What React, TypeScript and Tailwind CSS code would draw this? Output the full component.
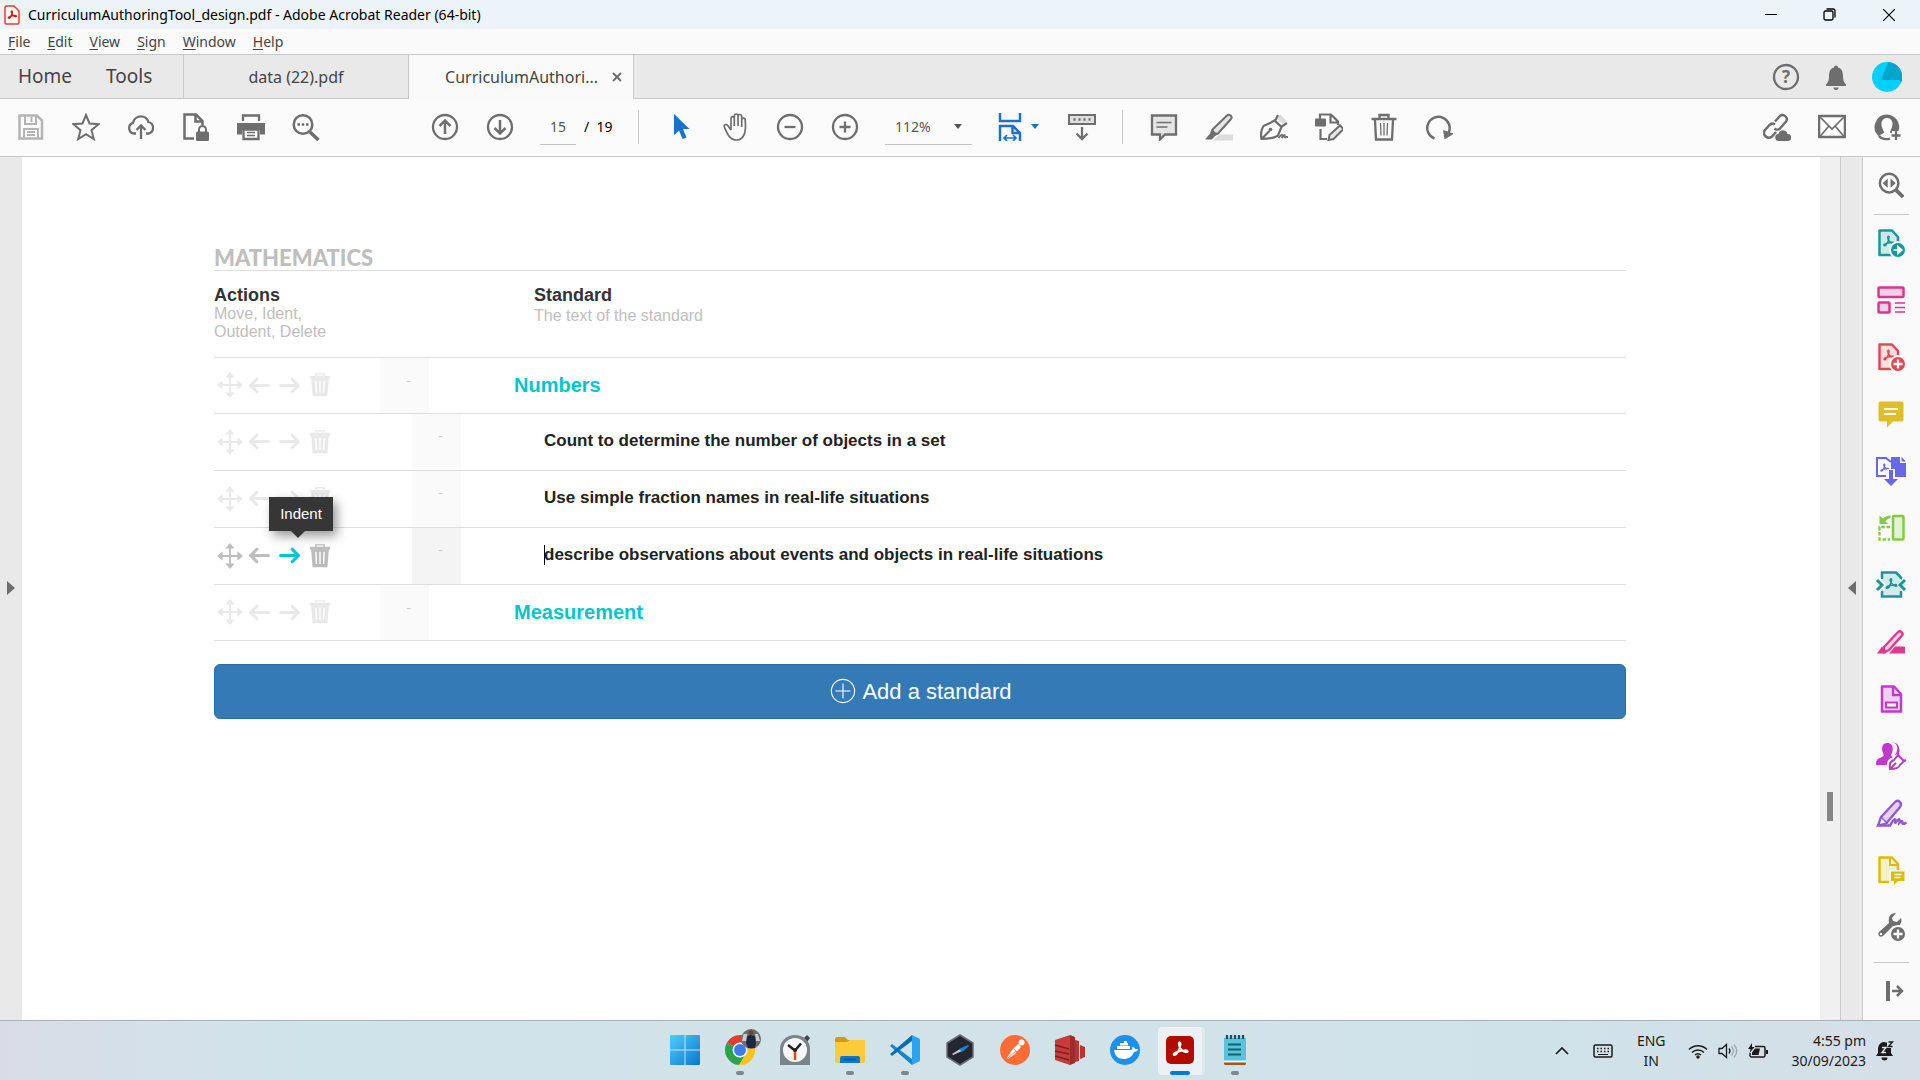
import type { ReactNode } from "react";

type IconProps = { children: ReactNode; className?: string; size?: string };

// every drawing sits on a 28 x 28 grid
const Icon = ({ children, className = "", size = "w-7 h-7" }: IconProps) => (
  <svg
    viewBox="0 0 28 28"
    fill="none"
    stroke="currentColor"
    strokeWidth="2"
    aria-hidden="true"
    className={`shrink-0 ${size} ${className}`}
  >
    {children}
  </svg>
);

const Trefoil = () => (
  <path d="M4 21C2 18 14 15 20 14.500C26 14 26 18 21 17C16 16 11.500 9 11.500 5C11.500 1.500 14.500 2 14 6C13.500 11 8 24 4 21Z" />
);

type ToolProps = { label: string; children: ReactNode; className?: string };

const Tool = ({ label, children, className = "text-[#6e6e6e]" }: ToolProps) => (
  <button
    aria-label={label}
    className={`w-[55px] h-full shrink-0 flex items-center justify-center ${className}`}
  >
    <Icon>{children}</Icon>
  </button>
);

const TitleBar = () => (
  <header className="h-[29px] bg-[#ecf4f9] flex items-center justify-between shrink-0">
    <div className="flex items-center gap-2 pl-1">
      <svg viewBox="0 0 16 20" className="w-4 h-5" fill="none" aria-hidden="true">
        <path
          d="M2.500 1H10l5 5v11.500a1.500 1.500 0 0 1-1.500 1.500h-11A1.500 1.500 0 0 1 1 17.500v-15A1.500 1.500 0 0 1 2.500 1Z"
          fill="#fff"
          stroke="#ec3b36"
          strokeWidth="1.500"
        />
        <g transform="translate(3 5) scale(.38)" stroke="#d0201b" strokeWidth="4">
          <Trefoil />
        </g>
      </svg>
      <h1 className="text-[14px] text-black whitespace-nowrap">
        CurriculumAuthoringTool_design.pdf - Adobe Acrobat Reader (64-bit)
      </h1>
    </div>
    <div className="flex h-full pr-[2px] text-black">
      <button aria-label="Minimize" className="w-[59px] flex items-center justify-center">
        <svg viewBox="0 0 12 12" className="w-3 h-3" stroke="currentColor" aria-hidden="true">
          <path d="M0 5.500h12" />
        </svg>
      </button>
      <button aria-label="Restore" className="w-[59px] flex items-center justify-center">
        <svg viewBox="0 0 13 13" className="w-[13px] h-[13px]" stroke="currentColor" strokeWidth="1.300" fill="none" aria-hidden="true">
          <rect x="1" y="3" width="9" height="9" rx="1.500" />
          <path d="M3.500 1H10a2 2 0 0 1 2 2v6.500" />
        </svg>
      </button>
      <button aria-label="Close" className="w-[59px] flex items-center justify-center">
        <svg viewBox="0 0 12 12" className="w-3 h-3" stroke="currentColor" strokeWidth="1.200" aria-hidden="true">
          <path d="M0 0l12 12M12 0L0 12" />
        </svg>
      </button>
    </div>
  </header>
);

const menus = ["File", "Edit", "View", "Sign", "Window", "Help"];

const MenuBar = () => (
  <nav className="h-[25px] bg-[#fafafa] flex items-center gap-[17px] pl-2 text-[14px] text-[#444] shrink-0">
    {menus.map((menu) => (
      <button key={menu}>
        <span className="underline underline-offset-2">{menu[0]}</span>
        {menu.slice(1)}
      </button>
    ))}
  </nav>
);

const TabBar = () => (
  <div className="h-[45px] bg-[#e9e9e9] border-y border-[#c8c8c8] flex items-stretch text-[#444] shrink-0">
    <div className="w-[184px] flex items-center pl-[18px] gap-[34px] text-[19px] border-r border-[#c8c8c8]">
      <button>Home</button>
      <button>Tools</button>
    </div>
    <button className="w-[225px] text-center text-[16px] border-r border-[#c8c8c8]">
      data (22).pdf
    </button>
    <div className="w-[225px] -mb-px bg-[#fafafa] flex items-center justify-end gap-[14px] pr-[11px] text-[16px] border-r border-[#c8c8c8]">
      <button>CurriculumAuthori...</button>
      <button aria-label="Close tab">
        <svg viewBox="0 0 10 10" className="w-[10px] h-[10px]" stroke="#6e6e6e" strokeWidth="2" aria-hidden="true">
          <path d="M1 1l8 8M9 1L1 9" />
        </svg>
      </button>
    </div>
    <div className="ml-auto flex items-center gap-[22px] pr-[18px] text-[#6e6e6e]">
      <button aria-label="Help">
        <Icon>
          <circle cx="14" cy="14" r="12" strokeWidth="2.300" />
          <text x="14" y="20" textAnchor="middle" fill="currentColor" stroke="none" fontSize="17" fontWeight="700">
            ?
          </text>
        </Icon>
      </button>
      <button aria-label="Notifications">
        <Icon>
          <path
            d="M14 2.500a2 2 0 0 1 2 2c4 1 5 4.500 5 8.500 0 4.500 1 6.500 3 8.500v1.500H4v-1.500c2-2 3-4 3-8.500 0-4 1-7.500 5-8.500a2 2 0 0 1 2-2ZM11.500 24.500h5a2.500 2.500 0 0 1-5 0Z"
            fill="currentColor"
            stroke="none"
          />
        </Icon>
      </button>
      <button aria-label="Account">
        <svg viewBox="0 0 30 30" className="w-[30px] h-[30px]" aria-hidden="true">
          <circle cx="15" cy="15" r="15" fill="#00cfff" />
          <path d="M9 18L16.500 0A15 15 0 0 1 29.500 20L27 18Z" fill="#00a5cb" />
        </svg>
      </button>
    </div>
  </div>
);

const Toolbar = () => (
  <div
    role="toolbar"
    className="h-[58px] pb-[2px] bg-[#fbfbfb] border-b border-[#c8c8c8] flex items-center shrink-0"
  >
    <div className="flex h-full pl-[3px]">
      <Tool label="Save" className="text-[#b4b4b4]">
        <path d="M2.500 2.500H20l5 5v18H2.500Z" strokeWidth="2.500" />
        <path d="M8 3v8h11V3M14.500 4v5M7 25v-9h14v9M10 19h8M10 22h8" />
      </Tool>
      <Tool label="Star">
        <path d="M14 2l3.500 8.500 9 .7-7 6 2.300 8.900L14 21.200l-7.800 4.900 2.300-8.900-7-6 9-.7Z" />
      </Tool>
      <Tool label="Upload">
        <path d="M9 20.500H7A5.500 5.500 0 0 1 6 9.800 8 8 0 0 1 21.500 9a6 6 0 0 1 .5 11.500h-3M14 26V13M9.500 17l4.500-4.500 4.500 4.500" strokeWidth="2.300" />
      </Tool>
      <Tool label="Protect">
        <path d="M12 25.500H2.500v-24H14l6.500 6.500v4M13.500 2v6.500H20" strokeWidth="2.500" />
        <rect x="14" y="18.500" width="13" height="9.500" rx="1.500" fill="currentColor" stroke="none" />
        <path d="M17 19v-2.500a3.500 3.500 0 0 1 7 0V19" />
      </Tool>
      <Tool label="Print">
        <path d="M6 8V2.500h16V8" strokeWidth="2.300" />
        <path d="M0 10h28v11.500h-5V17H5v4.500H0Z" fill="currentColor" stroke="none" />
        <path d="M6.500 16.500h15V26h-15Z" fill="#fff" strokeWidth="2.300" />
        <path d="M10 19.500h8M10 22.500h8" strokeWidth="1.500" />
      </Tool>
      <Tool label="Find">
        <circle cx="11" cy="11.500" r="9.300" strokeWidth="2.500" />
        <path d="M18 19l8.500 8" strokeWidth="3.500" />
        <path d="M5.500 11.500h2.500M9.800 11.500h2.500M14 11.500h2.500" strokeWidth="2.500" />
      </Tool>
    </div>
    <div className="flex items-center h-full ml-[84px]">
      <Tool label="Previous page">
        <circle cx="14" cy="14" r="12" strokeWidth="2.300" />
        <path d="M14 21V8M8.500 13L14 7.500l5.500 5.500" strokeWidth="2.500" />
      </Tool>
      <Tool label="Next page">
        <circle cx="14" cy="14" r="12" strokeWidth="2.300" />
        <path d="M14 7v13M8.500 15l5.500 5.500 5.500-5.500" strokeWidth="2.500" />
      </Tool>
      <input
        aria-label="Page number"
        defaultValue="15"
        className="w-9 h-9 ml-[13px] text-center text-[14px] text-[#555] border-b border-[#c4c4c4]"
      />
      <span className="w-[62px] pl-2 text-[14px] text-black whitespace-pre">/  19</span>
      <div className="w-px h-[34px] bg-[#c8c8c8]" />
    </div>
    <div className="flex items-center h-full ml-[13px]">
      <Tool label="Select" className="text-[#1b71cc]">
        <path d="M8 1v21l5-4.500 3.500 8.500 4-1.500-3.500-8.500h6.500Z" fill="currentColor" stroke="none" />
      </Tool>
      <Tool label="Hand">
        <path
          d="M8 17V5.500c0-2.500 3.300-2.500 3.300 0V13 3c0-2.700 3.700-2.700 3.700 0v10V3.500c0-2.700 3.700-2.700 3.700 0V14 7c0-2.500 3.500-2.500 3.500 0 .4 5 2.300 19-8.200 20C6 27 4 20 1.500 14.500 0 11 4 10.500 5.500 13.500L8 17"
          transform="translate(2 0)"
          strokeWidth="1.700"
        />
      </Tool>
      <Tool label="Zoom out">
        <circle cx="14" cy="14" r="12" strokeWidth="2.300" />
        <path d="M8.500 14h11" strokeWidth="2.300" />
      </Tool>
      <Tool label="Zoom in">
        <circle cx="14" cy="14" r="12" strokeWidth="2.300" />
        <path d="M8.500 14h11M14 8.500v11" strokeWidth="2.300" />
      </Tool>
      <button
        aria-label="Zoom level"
        className="w-[87px] h-9 ml-[13px] flex items-center justify-between pl-[10px] pr-[10px] text-[14px] text-[#555] border-b border-[#c4c4c4]"
      >
        112%
        <span className="border-x-4 border-x-transparent border-t-[5px] border-t-[#555]" />
      </button>
      <button aria-label="Fit width" className="ml-6 flex items-center gap-[7px] text-[#1b71cc]">
        <Icon>
          <path d="M4 0v8h20V0" strokeWidth="2.500" />
          <path d="M4 30V13h13l7 7v10M16.500 13.500V20H24" strokeWidth="2.500" />
          <path d="M8 25h12M11 22l-3 3 3 3M17 22l3 3-3 3" strokeWidth="1.700" />
        </Icon>
        <span className="border-x-4 border-x-transparent border-t-[5px] border-t-[#1b71cc]" />
      </button>
      <button aria-label="Page display" className="ml-[29px] text-[#6e6e6e]">
        <Icon>
          <rect x="1" y="2" width="26" height="9" strokeWidth="2" fill="#dedede" />
          <path d="M5.500 6.500h2M10.500 6.500h2M15.500 6.500h2M20.500 6.500h2" strokeWidth="2.500" />
          <path d="M14 14v12M8.500 20.500L14 26l5.500-5.500" strokeWidth="2.300" />
        </Icon>
      </button>
      <div className="w-px h-[34px] ml-[26px] bg-[#c8c8c8]" />
    </div>
    <div className="flex h-full ml-[13px]">
      <Tool label="Comment">
        <path d="M2 2.500h24v19H15l-5 5v-5H2Z" fill="#e4e4e4" strokeWidth="2.300" />
        <path d="M6.500 9.500h15M6.500 14h11" strokeWidth="1.700" />
      </Tool>
      <Tool label="Highlight">
        <path d="M8 27.500l6-6h14v6Z" fill="#dcdcdc" stroke="none" />
        <path d="M8 16L22 2.500c2-2 6 1 4 3.500L13 20.500l-4 .5-2-2Z" fill="#e4e4e4" />
        <path d="M6.500 16l6.500 5.500-3 1.500-3 3.500H0l5-6Z" fill="currentColor" stroke="none" />
      </Tool>
      <Tool label="Sign">
        <path d="M17 6l3-5 7 7-4 3Z" fill="#dcdcdc" stroke="none" />
        <path d="M1.500 26c-1-5 0-10 2-13 4-2 7-3 11-5.500l7 6.500c-2 4-2 6-4 9-4 2-9 3-16 3Zm0 0l8-8M15 8l3-6M21 14l6-4" strokeWidth="2.200" />
        <circle cx="10.500" cy="16.500" r="1.800" fill="currentColor" stroke="none" />
        <path d="M18.500 25c4-5 4-4 3.500 0 3-5 3-3 3 0 1-2 1-1 3-1" strokeWidth="1.800" />
      </Tool>
      <Tool label="Edit PDF">
        <path d="M5 6V1.500h11l7 7V12M15.500 2v7.500H23M5.500 16v10H12" strokeWidth="2.200" />
        <rect x="0" y="5.500" width="11" height="8" rx="1" fill="currentColor" stroke="none" />
        <path d="M13.500 27l1-5L25 12.500l3.500 3.500L18.500 26Z" fill="#e9e9e9" />
      </Tool>
      <Tool label="Delete">
        <path d="M1.500 6h25M9.500 6V2h9v4M5 7l1 19.500h16L23 7" strokeWidth="2.300" />
        <path d="M10.500 10l.5 12.500M14 10v12.500M17.500 10l-.5 12.500" strokeWidth="1.300" />
      </Tool>
      <Tool label="Rotate">
        <path d="M9.500 25.500A11.200 11.200 0 1 1 23.500 20" strokeWidth="2.500" />
        <path d="M18 17l11 3.500-9.500 6Z" fill="currentColor" stroke="none" />
      </Tool>
    </div>
    <div className="flex h-full ml-auto pr-[6px]">
      <Tool label="Share link">
        <path d="M12 8.500l5-5.500c3-3 9 1.500 6 5.500l-6 7c-2 1.800-4.500 1-5.500 0M12 11.500c-1.500-1-4-1-5.500.5L2 17c-3.500 4.500 2.500 10 7 6.500l4-4.500" strokeWidth="2.500" />
        <path d="M16 28a3.500 3.500 0 0 1-.5-7c1-5 8-5 9 0a3.500 3.500 0 0 1 .5 7Z" fill="currentColor" stroke="none" />
      </Tool>
      <Tool label="Email">
        <rect x="1" y="3" width="26" height="21" strokeWidth="2.500" />
        <path d="M2 4l12 12L26 4M2 23.500l8.500-10M26 23.500l-8.500-10" strokeWidth="1.700" />
      </Tool>
      <Tool label="Add people">
        <path
          d="M14 1.500A12.500 12.500 0 0 0 6 23.500c1-2.500 4-2 5-4 .5-1-2.500-4-2.500-8.500 0-8 11-8 11 0 0 4-2.500 6.500-2.500 8.500l2 1v-2.500h6.500A12.500 12.500 0 0 0 14 1.500Z"
          fill="currentColor"
          stroke="none"
        />
        <path d="M6 23c2 3 8 4 11 2.500M23 18v9M18.500 22.500h9" strokeWidth="2.300" />
      </Tool>
    </div>
  </div>
);

const actionButton = "w-[25px] h-6 flex items-center justify-center";

const RowActions = ({ active }: { active: boolean }) => (
  <div className={`flex items-center gap-[5px] pl-[3px] ${active ? "text-[#bdbdbd]" : "text-[#e9e9e9]"}`}>
    <button aria-label="Move" className={actionButton}>
      <Icon size="w-[26px] h-[26px]">
        <path d="M14 4v20M4 14h20" />
        <path d="M14 0l5 6H9ZM14 28l5-6H9ZM0 14l6-5v10ZM28 14l-6-5v10Z" fill="currentColor" stroke="none" />
      </Icon>
    </button>
    <button aria-label="Outdent" className={actionButton}>
      <Icon size="w-[25px] h-[25px]">
        <path d="M24 14H4M11 7l-7 7 7 7" strokeWidth="3.500" strokeLinecap="round" strokeLinejoin="round" />
      </Icon>
    </button>
    <button aria-label="Indent" className={`relative ${actionButton} ${active ? "text-[#00c5cd]" : ""}`}>
      <Icon size="w-[25px] h-[25px]">
        <path d="M4 14h20M17 7l7 7-7 7" strokeWidth="3.500" strokeLinecap="round" strokeLinejoin="round" />
      </Icon>
      {active && (
        <span
          role="tooltip"
          className="absolute z-10 left-[-8px] bottom-[37px] w-16 h-[34px] bg-[#363636] text-white text-[15px] leading-[34px] shadow-[4px_5px_10px_rgba(0,0,0,0.4)]"
        >
          Indent
          <span className="absolute left-[22px] top-[34px] border-x-[7px] border-x-transparent border-t-[7px] border-t-[#363636]" />
        </span>
      )}
    </button>
    <button aria-label="Delete" className={actionButton}>
      <Icon size="w-[26px] h-[26px]">
        <path d="M9.500 4.500V2h9v2.500" strokeWidth="1.500" />
        <path d="M3 4h22v3h-1.500L22 26H6L4.500 7H3Z" fill="currentColor" stroke="none" />
        <path d="M9.500 9.500l.7 13M14 9.500v13M18.500 9.500l-.7 13" stroke="#fff" strokeWidth="1.500" />
      </Icon>
    </button>
  </div>
);

type Row = { text: string; level: 1 | 2; active?: boolean };

const rows: Row[] = [
  { text: "Numbers", level: 1 },
  { text: "Count to determine the number of objects in a set", level: 2 },
  { text: "Use simple fraction names in real-life situations", level: 2 },
  { text: "describe observations about events and objects in real-life situations", level: 2, active: true },
  { text: "Measurement", level: 1 },
];

const StandardRow = ({ text, level, active = false }: Row) => (
  <tr className={`border-b border-[#dedede] ${level === 1 ? "h-14" : "h-[57px]"}`}>
    <td className="p-0">
      <RowActions active={active} />
    </td>
    <td className="p-0 h-px">
      <div
        className={`w-[49px] h-full flex justify-center pl-2 text-[15px] leading-5 text-[#cfcfcf] ${
          level === 1 ? "pt-[13px]" : "ml-8 pt-3"
        } ${active ? "bg-[#f4f4f4]" : "bg-[#fafafa]"}`}
      >
        -
      </div>
    </td>
    <td
      className={
        level === 1
          ? "p-0 text-[20px] font-bold text-[#00c5cd]"
          : "p-0 pl-[30px] pb-[2px] text-[17px] font-bold text-[#222]"
      }
    >
      {active ? (
        <div className="flex items-center">
          <span className="w-px -mr-px h-5 bg-black" />
          <input aria-label="Standard text" defaultValue={text} className="w-full font-bold" />
        </div>
      ) : (
        text
      )}
    </td>
  </tr>
);

const Standards = () => (
  <section className="pt-[89px] pl-48 pr-[194px] font-['Liberation_Sans',Arial,sans-serif]">
    <h2 className="text-[22px] leading-6 font-black text-[#bebebe] border-b border-[#dedede] font-['Lato',sans-serif]">
      MATHEMATICS
    </h2>
    <table className="w-full table-fixed border-collapse text-left">
      <colgroup>
        <col className="w-[166px]" />
        <col className="w-[134px]" />
        <col />
      </colgroup>
      <thead>
        <tr className="h-[86px] border-b border-[#dedede] align-top">
          <th className="p-0 pt-[14px] font-normal" colSpan={2}>
            <div className="text-[18px] leading-5 font-bold text-[#333]">Actions</div>
            <div className="text-[16px] leading-[18px] text-[#bebebe]">
              Move, Ident,
              <br />
              Outdent, Delete
            </div>
          </th>
          <th className="p-0 pt-[14px] pl-5 font-normal">
            <div className="text-[18px] leading-5 font-bold text-[#333]">Standard</div>
            <div className="text-[16px] leading-[22px] text-[#bebebe]">The text of the standard</div>
          </th>
        </tr>
      </thead>
      <tbody>
        {rows.map((row) => (
          <StandardRow key={row.text} {...row} />
        ))}
      </tbody>
    </table>
    <button className="mt-[23px] w-full h-[55px] pl-[2px] rounded-md bg-[#337ab7] border border-[#2e6da4] text-white text-[22px] flex items-center justify-center gap-[6px]">
      <Icon size="w-[26px] h-[26px]">
        <circle cx="14" cy="14" r="12.500" strokeWidth="1.200" />
        <path d="M14 6v16M6 14h16" strokeWidth="1.200" />
      </Icon>
      Add a standard
    </button>
  </section>
);

type PageProps = { children: ReactNode; fill: string };

const Page = ({ children, fill }: PageProps) => (
  <>
    <path d="M2.500 1.500H15l6 6.500v18H2.500Z" fill={fill} strokeWidth="2.500" strokeLinejoin="round" />
    {children}
  </>
);

const sideTools = [
  {
    label: "Export PDF",
    color: "text-[#1b959a]",
    icon: (
      <Page fill="#cfe8e9">
        <g transform="translate(5 6) scale(.5)" strokeWidth="3"><Trefoil /></g>
        <circle cx="21" cy="21" r="8" fill="currentColor" stroke="#fafafa" />
        <path d="M16.500 21h7M21 17.500l4 3.500-4 3.500Z" stroke="#fff" fill="#fff" strokeWidth="1.500" />
      </Page>
    ),
  },
  {
    label: "Organize Pages",
    color: "text-[#d83790]",
    icon: (
      <>
        <rect x="1.500" y="1.500" width="25" height="9.500" rx="1" fill="#f4cfe3" strokeWidth="2.500" />
        <rect x="1.500" y="16.500" width="11" height="10" rx="1" fill="#f4cfe3" strokeWidth="2.500" />
        <path d="M18 17h10M18 21.500h10M18 26h10" strokeWidth="1.500" />
      </>
    ),
  },
  {
    label: "Create PDF",
    color: "text-[#e34850]",
    icon: (
      <Page fill="#f9dfe0">
        <g transform="translate(5 6) scale(.5)" strokeWidth="3"><Trefoil /></g>
        <circle cx="21" cy="21" r="8" fill="currentColor" stroke="#fafafa" />
        <path d="M16.500 21h9M21 16.500v9" stroke="#fff" strokeWidth="2.300" />
      </Page>
    ),
  },
  {
    label: "Comment",
    color: "text-[#dfbf27]",
    icon: (
      <>
        <path d="M3.500 1.500h21a2 2 0 0 1 2 2v16a2 2 0 0 1-2 2H16l-6 6v-6H3.500a2 2 0 0 1-2-2v-16a2 2 0 0 1 2-2Z" fill="currentColor" stroke="none" />
        <path d="M7 9h14M7 14h12" stroke="#fff" />
      </>
    ),
  },
  {
    label: "Combine Files",
    color: "text-[#6767ec]",
    icon: (
      <>
        <path d="M9 19H0V1h9l5 4" strokeWidth="2" />
        <path d="M14 0h9v6h6v14H14Z" fill="currentColor" stroke="none" />
        <path d="M24.500 0l4.500 4.500h-4.500Z" fill="currentColor" stroke="none" />
        <g transform="translate(2.500 6) scale(.38)" strokeWidth="3.500"><Trefoil /></g>
        <path d="M14 12v12" stroke="#fafafa" strokeWidth="8" />
        <path d="M14 13v10" strokeWidth="4" />
        <path d="M7 22h14l-7 7Z" fill="currentColor" stroke="none" />
      </>
    ),
  },
  {
    label: "Compare",
    color: "text-[#83cc40]",
    icon: (
      <>
        <rect x="16" y="2" width="10.500" height="23.500" rx="1" fill="#e1f3d0" strokeWidth="2.500" />
        <path d="M13 13H2.500v12.500H13" strokeDasharray="3.500 1.700" strokeWidth="2.300" />
        <path d="M2.500 1.500v8.500h9L8.500 7.500c1-2 3-3 5-3.500V1.500C10.500 1.500 8 2.500 6 4.500Z" fill="currentColor" stroke="none" />
      </>
    ),
  },
  {
    label: "Compress PDF",
    color: "text-[#1b959a]",
    icon: (
      <>
        <path d="M5 8V1.500h14l5 5V9M5 20v5.500h19V20" fill="#d5e9ea" strokeWidth="2.500" />
        <path d="M5 8h19v12H5Z" fill="#d5e9ea" stroke="none" />
        <g transform="translate(7.500 6.500) scale(.5)" strokeWidth="3.500"><Trefoil /></g>
        <path d="M0 8l5 6-5 6M29 8l-5 6 5 6" stroke="#fafafa" strokeWidth="6" />
        <path d="M0 9l5 5-5 5M28 9l-5 5 5 5" strokeWidth="3" />
      </>
    ),
  },
  {
    label: "Redact",
    color: "text-[#e0378f]",
    icon: (
      <>
        <path d="M7 19L21 4c2.500-2 6 1 4 3.500L12 22l-5 2Z" fill="#f9cfe3" strokeWidth="2.300" />
        <path d="M0 25.500l5-7 5 5-2 2ZM12 25.500l6-7h9a1 1 0 0 1 1 1v6Z" fill="currentColor" stroke="none" />
      </>
    ),
  },
  {
    label: "Prepare Form",
    color: "text-[#c038cc]",
    icon: (
      <>
        <path d="M5 1.500h12l7 7.500v17.500H5Z" fill="#efcff2" strokeWidth="2.500" strokeLinejoin="round" />
        <path d="M16 2v8h8" strokeWidth="2.300" />
        <rect x="9" y="17.500" width="11" height="5" fill="#fff" />
      </>
    ),
  },
  {
    label: "Request Signatures",
    color: "text-[#c038cc]",
    icon: (
      <>
        <path d="M10 1c8 0 6 9 4 12 0 2 3 2 3 4l-5 6H-1c0-5 1-6 6-8 3-1 1-3 1-4-2-4-1-10 4-10ZM15 1c7-1 6 9 3 12l3 1c3-3 2-15-6-13Z" fill="currentColor" stroke="none" />
        <path d="M12 27c0-5 1-9 4-9l7-5 5 5-4 5c-1 3-6 4-12 4Z" fill="#fff" stroke="#fafafa" strokeWidth="5" />
        <path d="M13 27c-1-5 1-8 4-9l4-5 6 6-4 4c-1 3-5 4-10 4Zm0 0l6-6M20 12l2-1M27 19l2-1" />
      </>
    ),
  },
  {
    label: "Fill & Sign",
    color: "text-[#9256d9]",
    icon: (
      <>
        <path d="M1 26.500L4 18 18 3c3-3 8 1 5 5L10 23.500Zm0 0H14" fill="#e2d3f5" strokeWidth="2.300" />
        <path d="M4 18l6 6-8 2Z" fill="#fafafa" strokeWidth="1.500" />
        <path d="M13 26.500c5-9 6-7 5-2 4-6 5-5 4.500-1 3-3 3-1 3 1 1 1 2 0 4-1" strokeWidth="2.500" />
      </>
    ),
  },
  {
    label: "Send for Comments",
    color: "text-[#ddbb0b]",
    icon: (
      <Page fill="#f6efc9">
        <path d="M13 2v7h8" />
        <path d="M12 14h18v17H12Z" fill="#fafafa" stroke="none" />
        <path d="M14 15.500h13.500v9.500H21l-4 4v-4h-3Z" fill="currentColor" stroke="none" />
        <path d="M17.500 18.500h7M17.500 21.500h6" stroke="#fff" strokeWidth="1.500" />
      </Page>
    ),
  },
  {
    label: "More Tools",
    color: "text-[#6e6e6e]",
    icon: (
      <>
        <path d="M19 0l-4 5 1 3 4 1 4-4c2 5-2 10-8 8L6 23c-3 2-6-1-4-4l10-9c-1-6 1-10 7-10Z" fill="currentColor" stroke="none" />
        <circle cx="4" cy="21" r="1.200" fill="#fff" stroke="none" />
        <circle cx="21" cy="21" r="8" fill="currentColor" stroke="#fafafa" />
        <path d="M16.500 21h9M21 16.500v9" stroke="#fff" strokeWidth="2.300" />
      </>
    ),
  },
];

const sideButton = "w-full h-[57px] pb-[2px] pr-[2px] flex items-center justify-center";

const SidePanel = () => (
  <aside className="w-[58px] shrink-0 border-l border-[#c8c8c8] bg-[#fafafa] flex flex-col items-center">
    <button aria-label="Search tools" className={`${sideButton} text-[#6e6e6e]`}>
      <Icon size="w-[26px] h-[26px]">
        <circle cx="12" cy="12" r="10" strokeWidth="2.700" />
        <path d="M19 19l8 8" strokeWidth="4" />
        <path d="M10.500 7v10L5 12ZM13.500 7v10l5.500-5Z" fill="currentColor" stroke="none" />
      </Icon>
    </button>
    <div className="w-[35px] h-px bg-[#c8c8c8]" />
    {sideTools.map((tool) => (
      <button key={tool.label} aria-label={tool.label} className={`${sideButton} ${tool.color}`}>
        <Icon className="overflow-visible">{tool.icon}</Icon>
      </button>
    ))}
    <div className="w-[35px] h-px mt-[6px] bg-[#c8c8c8]" />
    <button aria-label="Hide panel" className={`${sideButton} text-[#6e6e6e]`}>
      <Icon>
        <path d="M11 4v20" strokeWidth="4" />
        <path d="M15 14h10M20 9l5 5-5 5" strokeWidth="2.500" />
      </Icon>
    </button>
  </aside>
);

const Workspace = () => (
  <div className="flex-1 min-h-0 flex items-stretch">
    <button aria-label="Show navigation pane" className="w-[22px] pb-[2px] shrink-0 bg-[#e9e9e9] flex items-center justify-center">
      <span className="border-y-[7px] border-y-transparent border-l-[8px] border-l-[#6e6e6e]" />
    </button>
    <main className="flex-1 min-w-0 bg-white">
      <Standards />
    </main>
    <div className="w-5 shrink-0 bg-[#f0f0f0] flex flex-col items-center">
      <div className="flex-[635]" />
      <div className="w-[6px] h-[29px] bg-[#868686]" />
      <div className="flex-[199]" />
    </div>
    <button aria-label="Collapse tools" className="w-[22px] pb-[2px] shrink-0 border-l border-[#c8c8c8] bg-[#e9e9e9] flex items-center justify-center">
      <span className="border-y-[7px] border-y-transparent border-r-[8px] border-r-[#6e6e6e]" />
    </button>
    <SidePanel />
  </div>
);

const apps = [
  {
    name: "Start",
    icon: (
      <>
        <defs>
          <linearGradient id="win" x1="0" y1="0" x2="1" y2="1">
            <stop stopColor="#4fcdf8" />
            <stop offset="1" stopColor="#0a77d0" />
          </linearGradient>
        </defs>
        <path d="M0 1a1 1 0 0 1 1-1h13.500v14.500H0ZM15.500 0H29a1 1 0 0 1 1 1v13.500H15.500ZM0 15.500h14.500V30H1a1 1 0 0 1-1-1ZM15.500 15.500H30V29a1 1 0 0 1-1 1H15.500Z" fill="url(#win)" />
      </>
    ),
  },
  {
    name: "Chrome",
    running: true,
    icon: (
      <>
        <path d="M15 15L2 7.500A15 15 0 0 1 28 7.500Z" fill="#e33b2e" />
        <path d="M15 15L2 7.500A15 15 0 0 0 14 30l7.500-12Z" fill="#2da14c" />
        <path d="M14 30A15 15 0 0 0 28 7.500H15L21.500 18Z" fill="#fcc31e" />
        <circle cx="15" cy="15" r="7.500" fill="#fff" />
        <circle cx="15" cy="15" r="6" fill="#3b7ded" />
        <circle cx="26" cy="4" r="10" fill="#716d68" />
        <path d="M18.500 -1h3.500v7h-5ZM30 -1h3l2 7h-4Z" fill="#c5cdd0" />
        <circle cx="26" cy="-2.500" r="2.500" fill="#6b4331" />
        <path d="M22 1l4-1 4 1 1 7-1 5h-7l-2-5Z" fill="#1c2944" />
      </>
    ),
  },
  {
    name: "Clock",
    icon: (
      <>
        <path d="M24 3l3-3 3 3-3 4Z" fill="#3f454b" />
        <path d="M0 30V14a15 14 0 0 1 30 0v16Z" fill="#7b838b" />
        <circle cx="15" cy="15" r="12" fill="#f7f7f7" />
        <path d="M8 10l7 5.500L21 8.500" stroke="#222" strokeWidth="2.500" fill="none" />
        <path d="M15 15v10" stroke="#d9481c" strokeWidth="2.500" />
        <circle cx="15" cy="15" r="2" fill="#222" />
      </>
    ),
  },
  {
    name: "File Explorer",
    running: true,
    icon: (
      <>
        <path d="M0 4a2 2 0 0 1 2-2h8l3 3h15a2 2 0 0 1 2 2v6H0Z" fill="#d9980e" />
        <path d="M0 7h12l3-2h15v21a2 2 0 0 1-2 2H2a2 2 0 0 1-2-2Z" fill="#fccb3a" />
        <path d="M5 28v-5a2 2 0 0 1 2-2h16a2 2 0 0 1 2 2v5Z" fill="#1277c9" />
        <path d="M9 24.500h12" stroke="#0b4f8e" strokeWidth="1.500" />
      </>
    ),
  },
  {
    name: "Visual Studio Code",
    running: true,
    icon: (
      <>
        <path d="M0 11l2-2 20 15v6Z" fill="#1486cd" />
        <path d="M0 19l2 2L22 6V0Z" fill="#0a6fb0" />
        <path d="M22 0l6 3a2 2 0 0 1 2 2v20a2 2 0 0 1-2 2l-6 3Z" fill="#2aa4ee" />
      </>
    ),
  },
  {
    name: "Hex Editor",
    icon: (
      <>
        <path d="M15 0l13 8v14l-13 8-13-8V8Z" fill="#23272f" stroke="#6a7078" strokeWidth="1.500" />
        <path d="M7 19l8-5 2 2-9 4Z" fill="#c8ccd2" />
        <path d="M14 14l9-4 1 1-7 6Z" fill="#1a86e8" />
      </>
    ),
  },
  {
    name: "Postman",
    icon: (
      <>
        <circle cx="15" cy="15" r="15" fill="#ff6c37" />
        <circle cx="21.500" cy="7.500" r="3" fill="#fff" />
        <path d="M18 9l3 3-6 7-7 5-1-1 5-8Z" fill="#fff" />
        <path d="M8 23l8-7M14 14l3 3" stroke="#ff6c37" strokeWidth=".8" />
      </>
    ),
  },
  {
    name: "Redis",
    icon: (
      <>
        <path d="M0 5L15 0v30L0 25Z" fill="#c93a3a" />
        <path d="M15 0l5 2v26l-5 2Z" fill="#9e2b2e" />
        <path d="M20 5l4 1v20l-4 1ZM25 10l5 2v10l-5 2Z" fill="#b93436" />
        <path d="M0 10l14 4M0 16l14 3M0 21l14 4" stroke="#7d1f22" strokeWidth="1.500" />
      </>
    ),
  },
  {
    name: "Docker",
    icon: (
      <>
        <circle cx="15" cy="15" r="15" fill="#1d90ee" />
        <path d="M4 15h17c1 0 2-1 1-3 2 0 3 1 3 2h3c0 2-2 3-4 3-2 5-6 7-10 7-6 0-9-3-10-9Z" fill="#fff" />
        <path d="M7 11h13v3H7ZM10 8h8v2.500h-8ZM14 6h3v2h-3Z" fill="#fff" />
      </>
    ),
  },
  {
    name: "Acrobat Reader",
    current: true,
    icon: (
      <>
        <rect x="1" y="1" width="28" height="28" rx="5" fill="#b30b00" />
        <g transform="translate(6 5.500) scale(.68)" stroke="#fff" strokeWidth="2.800" fill="none">
          <Trefoil />
        </g>
      </>
    ),
  },
  {
    name: "Notepad",
    running: true,
    icon: (
      <>
        <path d="M4 26h22v2.500a1.500 1.500 0 0 1-1.500 1.500h-19A1.500 1.500 0 0 1 4 28.500Z" fill="#a8541a" />
        <path d="M4 3h22v24H4Z" fill="#57c4d9" />
        <path d="M4 25.500h22v2H4Z" fill="#e8f6f9" />
        <path d="M8 9.500h13M8 14.500h13M8 19.500h13" stroke="#14606f" strokeWidth="1.800" />
        <path d="M7 0v4M11 0v4M15 0v4M19 0v4M23 0v4" stroke="#17505e" strokeWidth="2.300" />
      </>
    ),
  },
];

const Taskbar = () => (
  <footer className="h-[60px] shrink-0 grid grid-cols-[1fr_auto_1fr] items-center border-t border-[#a9b4ba] bg-[linear-gradient(90deg,#d9dce6_0%,#d4e0ea_8%,#cfe3ea_16%,#d3e2e9_50%,#cfe2ea_80%,#d6dfe7_100%)] text-[#1b1b1b]">
    <div />
    <div className="flex h-full">
      {apps.map((app) => (
        <button key={app.name} aria-label={app.name} className="w-[55px] h-full flex items-center justify-center">
          <span
            className={`w-11 h-12 flex flex-col items-center justify-end gap-[6px] rounded ${
              app.current ? "bg-[#ebf1f5] shadow-[3px_0_0_#e0e9ee]" : ""
            }`}
          >
            <svg viewBox="0 0 30 30" className="w-[30px] h-[30px] overflow-visible" aria-hidden="true">
              {app.icon}
            </svg>
            <span
              className={`h-1 rounded-full ${app.current ? "w-5 bg-[#0078d7]" : "w-2"} ${
                app.running ? "bg-[#7d868b]" : ""
              }`}
            />
          </span>
        </button>
      ))}
    </div>
    <div className="flex items-center justify-end pr-[26px] text-[14px] leading-5">
      <button aria-label="Show hidden icons" className="mr-6">
        <svg viewBox="0 0 14 8" className="w-[14px] h-2" fill="none" stroke="currentColor" strokeWidth="1.700" aria-hidden="true">
          <path d="M1 7l6-6 6 6" />
        </svg>
      </button>
      <button aria-label="Touch keyboard" className="mr-6">
        <svg viewBox="0 0 20 14" className="w-5 h-[14px]" fill="none" stroke="currentColor" strokeWidth="1.500" aria-hidden="true">
          <rect x="1" y="1" width="18" height="12" rx="1.500" />
          <path d="M4 4.500h12M4 7.500h12" strokeDasharray="1.500 2" />
          <path d="M5 10.500h10" strokeWidth="1" />
        </svg>
      </button>
      <button className="mr-[22px] text-center">
        ENG
        <br />
        IN
      </button>
      <button aria-label="Network, sound and battery" className="flex items-center gap-[10px] mr-6">
        <svg viewBox="0 0 20 16" className="w-5 h-4" fill="none" stroke="currentColor" strokeWidth="1.500" aria-hidden="true">
          <path d="M1 6.500a12.500 12.500 0 0 1 18 0M4 9.500a8.500 8.500 0 0 1 12 0M7 12a4.500 4.500 0 0 1 6 0" />
          <circle cx="10" cy="14" r="1.700" fill="currentColor" stroke="none" />
        </svg>
        <svg viewBox="0 0 20 16" className="w-5 h-4" fill="none" stroke="currentColor" strokeWidth="1.300" aria-hidden="true">
          <path d="M1 5.500h3L8.500 1.500v13L4 10.500H1ZM11 5.500q2 2.500 0 5" />
          <path d="M13.500 3.500q4 4.500 0 9M16 1.500q5.500 6.500 0 13" stroke="#9ba8ae" />
        </svg>
        <svg viewBox="0 0 20 16" className="w-5 h-4" fill="none" stroke="currentColor" strokeWidth="1.500" aria-hidden="true">
          <path d="M7 3.500h8.500a1.500 1.500 0 0 1 1.500 1.500v7.500a1.500 1.500 0 0 1-1.500 1.500h-12A1.500 1.500 0 0 1 2 12.500V10" />
          <path d="M7 5.500h5l-1.500 6.500H4V9.500ZM18 7h2v4h-2ZM4 0L0 6h2.500L1.500 10 6.500 4H4Z" fill="currentColor" stroke="none" />
        </svg>
      </button>
      <button className="text-right mr-[10px]">
        4:55 pm
        <br />
        30/09/2023
      </button>
      <button aria-label="Notification centre">
        <svg viewBox="0 0 18 20" className="w-[18px] h-5" fill="currentColor" aria-hidden="true">
          <path d="M0 15l2-3V7a6 6 0 0 1 8-5.500h1V7h4v5l2 3ZM5.500 16.500h6a3 3 0 0 1-6 0Z" />
          <path d="M6 6.500h4L6 11.500h4" stroke="#dce6ec" strokeWidth="1.400" fill="none" />
          <path d="M12.500 1h4l-4 4.500h4" stroke="currentColor" strokeWidth="1.400" fill="none" />
        </svg>
      </button>
    </div>
  </footer>
);

const App = () => {
  return (
    <div className="h-screen flex flex-col overflow-hidden bg-white font-['Noto_Sans','Open_Sans',sans-serif]">
      <TitleBar />
      <MenuBar />
      <TabBar />
      <Toolbar />
      <Workspace />
      <Taskbar />
    </div>
  );
};

export default App;
